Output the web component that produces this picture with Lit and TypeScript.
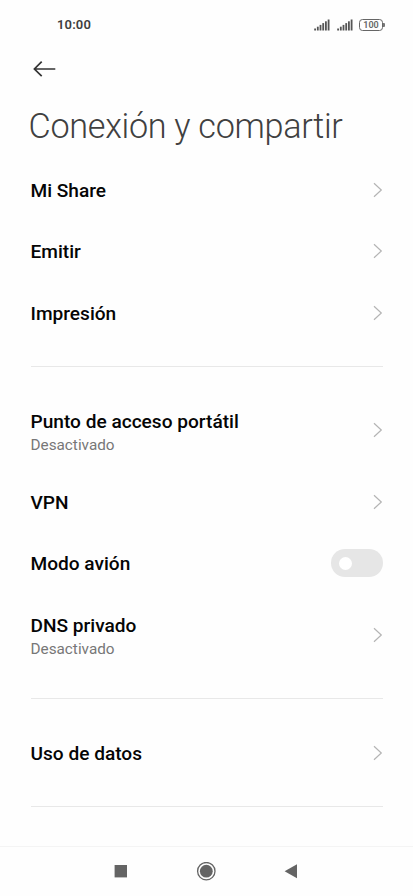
import { LitElement, html, svg, css, nothing } from "lit";
import { customElement, property, state } from "lit/decorators.js";
import { classMap } from "lit/directives/class-map.js";

interface Item {
  label: string;
  detail?: string;
  toggle?: boolean;
}

const GROUPS: Item[][] = [
  [{ label: "Mi Share" }, { label: "Emitir" }, { label: "Impresión" }],
  [
    { label: "Punto de acceso portátil", detail: "Desactivado" },
    { label: "VPN" },
    { label: "Modo avión", toggle: true },
    { label: "DNS privado", detail: "Desactivado" },
  ],
  [{ label: "Uso de datos" }],
];

@customElement("status-bar")
export class StatusBar extends LitElement {
  static styles = css`
    :host {
      display: flex;
      align-items: center;
      justify-content: space-between;
      height: 50px;
      padding: 0 28px 0 57px;
      box-sizing: border-box;
    }
    .time {
      padding-bottom: 1px;
      font-size: 13px;
      font-weight: 600;
      letter-spacing: 0.15px;
      color: #3f3f3f;
    }
    .icons {
      display: flex;
      align-items: center;
    }
    .signal {
      display: block;
      width: 16px;
      height: 12px;
      margin-right: 7px;
      fill: #555;
    }
    .battery {
      display: flex;
      align-items: center;
      justify-content: center;
      width: 24px;
      height: 12px;
      margin-left: -1px;
      box-sizing: border-box;
      border: 1.5px solid #666;
      border-radius: 3.5px;
      font-size: 9px;
      font-weight: 600;
      line-height: 10px;
      color: #666;
    }
    .tip {
      width: 2px;
      height: 4px;
      background: #777;
      border-radius: 0 1px 1px 0;
    }
  `;

  private signal() {
    return html`<svg class="signal" viewBox="0 0 16 12">
      ${[2, 3.8, 5.6, 7.4, 9.2, 11].map(
        (h, i) => svg`<rect x=${i * 2.7 + 0.2} y=${11.5 - h} width="1.8" height=${h} />`,
      )}
    </svg>`;
  }

  render() {
    return html`
      <span class="time">10:00</span>
      <div class="icons">
        ${this.signal()}${this.signal()}
        <span class="battery">100</span><span class="tip"></span>
      </div>
    `;
  }
}

@customElement("setting-row")
export class SettingRow extends LitElement {
  @property({ attribute: false }) item: Item = { label: "" };
  @state() private on = false;

  static styles = css`
    .row {
      display: flex;
      align-items: center;
      justify-content: space-between;
      height: 61.3px;
    }
    .tall {
      height: 82px;
    }
    .text {
      padding-top: 1px;
    }
    .tall .text {
      padding-top: 3.4px;
    }
    .label {
      font-size: 19.1px;
      font-weight: 500;
      line-height: 24px;
      color: #050505;
    }
    .detail {
      font-size: 15.3px;
      line-height: 22px;
      color: #777;
    }
    .chevron {
      display: block;
      width: 10px;
      height: 16px;
      margin-bottom: 1px;
      fill: none;
      stroke: #b4b4b4;
      stroke-width: 1.2;
    }
    .switch {
      display: flex;
      align-items: center;
      width: 52px;
      height: 28px;
      margin: 0 0 1px;
      padding: 0 8px;
      border: 0;
      border-radius: 14px;
      background: #e6e6e6;
    }
    .switch.on {
      justify-content: flex-end;
      background: #0d84ff;
    }
    .knob {
      width: 13px;
      height: 13px;
      border-radius: 50%;
      background: #fff;
    }
  `;

  render() {
    const { label, detail, toggle } = this.item;
    return html`<div class=${classMap({ row: true, tall: !!detail })}>
      <div class="text">
        <div class="label">${label}</div>
        ${detail ? html`<div class="detail">${detail}</div>` : nothing}
      </div>
      ${toggle
        ? html`<button
            class=${classMap({ switch: true, on: this.on })}
            role="switch"
            aria-label=${label}
            aria-checked=${this.on}
            @click=${() => (this.on = !this.on)}
          >
            <span class="knob"></span>
          </button>`
        : html`<svg class="chevron" viewBox="0 0 10 16">
            <path d="M1 1.2 L8.3 8 L1 14.8" />
          </svg>`}
    </div>`;
  }
}

@customElement("nav-bar")
export class NavBar extends LitElement {
  static styles = css`
    :host {
      display: flex;
      justify-content: center;
      gap: 65px;
      height: 50px;
      padding-right: 1px;
      box-sizing: border-box;
      border-top: 1px solid #f4f4f4;
    }
    .icon {
      display: block;
      width: 20px;
      height: 20px;
      margin-top: 15px;
      fill: #646464;
    }
    .ring {
      fill: none;
      stroke: #646464;
      stroke-width: 1.3;
    }
  `;

  render() {
    return html`
      <svg class="icon" viewBox="0 0 20 20"><rect x="3.6" y="3" width="12.4" height="12.4" /></svg>
      <svg class="icon" viewBox="0 0 20 20">
        <circle class="ring" cx="10.3" cy="9.2" r="8.7" />
        <circle cx="10.3" cy="9.2" r="6.4" />
      </svg>
      <svg class="icon" viewBox="0 0 20 20"><path d="M3.6 9.2 L16 2.2 V16.2 Z" /></svg>
    `;
  }
}

@customElement("app-root")
export class AppRoot extends LitElement {
  static styles = css`
    :host {
      display: flex;
      flex-direction: column;
      height: 896px;
      box-sizing: border-box;
      background: #fefefe;
      overflow: hidden;
      font-family: Roboto, "Liberation Sans", sans-serif;
    }
    .back {
      display: block;
      width: 24px;
      height: 18px;
      margin: 10px 0 0 33px;
      fill: none;
      stroke: #333;
      stroke-width: 1.7;
    }
    .title {
      margin: 28px 0 0 28.6px;
      font-size: 34.2px;
      font-weight: 300;
      letter-spacing: -0.3px;
      line-height: 40px;
      white-space: nowrap;
      color: #404040;
    }
    .list {
      flex: 1;
      padding: 14px 30.5px 0 30.5px;
    }
    .group {
      padding-bottom: 22px;
      margin-bottom: 23px;
      border-bottom: 1px solid #e8e8e8;
    }
  `;

  render() {
    return html`
      <status-bar></status-bar>
      <svg class="back" viewBox="0 0 24 18">
        <path d="M22.3 9 H1.6 M8.7 1.6 L1.4 9 L8.7 16.2" />
      </svg>
      <div class="title">Conexión y compartir</div>
      <div class="list">
        ${GROUPS.map(
          (group) => html`<div class="group">
            ${group.map((item) => html`<setting-row .item=${item}></setting-row>`)}
          </div>`,
        )}
      </div>
      <nav-bar></nav-bar>
    `;
  }
}
